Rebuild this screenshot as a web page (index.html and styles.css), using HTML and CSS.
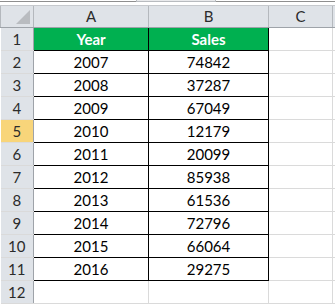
FILE: index.html
```html
<!DOCTYPE html>
<html lang="en">
<head>
    <meta charset="UTF-8">
    <title>Sales by Year</title>
    <link rel="stylesheet" href="styles.css">
</head>
<body>

<!-- top edge of the window -->
<div class="top-strip">
    <div class="scroll-stub"></div>
</div>

<table class="sheet">
    <colgroup>
        <col class="col-rownum">
        <col class="col-a">
        <col class="col-b">
        <col class="col-c">
        <col class="col-d">
    </colgroup>
    <thead>
        <tr>
            <th class="corner"><span class="corner-tri"></span></th>
            <th>A</th>
            <th>B</th>
            <th>C</th>
            <th></th>
        </tr>
    </thead>
    <tbody>
        <tr>
            <th class="rownum">1</th>
            <td class="head-cell">Year</td>
            <td class="head-cell">Sales</td>
            <td></td><td></td>
        </tr>
        <tr><th class="rownum">2</th><td class="data">2007</td><td class="data">74842</td><td></td><td></td></tr>
        <tr><th class="rownum">3</th><td class="data">2008</td><td class="data">37287</td><td></td><td></td></tr>
        <tr><th class="rownum">4</th><td class="data">2009</td><td class="data">67049</td><td></td><td></td></tr>
        <tr><th class="rownum active">5</th><td class="data">2010</td><td class="data">12179</td><td></td><td></td></tr>
        <tr><th class="rownum">6</th><td class="data">2011</td><td class="data">20099</td><td></td><td></td></tr>
        <tr><th class="rownum">7</th><td class="data">2012</td><td class="data">85938</td><td></td><td></td></tr>
        <tr><th class="rownum">8</th><td class="data">2013</td><td class="data">61536</td><td></td><td></td></tr>
        <tr><th class="rownum">9</th><td class="data">2014</td><td class="data">72796</td><td></td><td></td></tr>
        <tr><th class="rownum">10</th><td class="data">2015</td><td class="data">66064</td><td></td><td></td></tr>
        <tr><th class="rownum">11</th><td class="data">2016</td><td class="data">29275</td><td></td><td></td></tr>
        <tr><th class="rownum">12</th><td></td><td></td><td></td><td></td></tr>
    </tbody>
</table>

</body>
</html>
```

FILE: styles.css
```css
body {
    margin: 0;
    font-family: 'Lato', 'Liberation Sans', sans-serif;
    background-color: #ffffff;
    overflow: hidden;
}
.top-strip {
    height: 3px;
    border-top: 1px solid #8f8f8f;
    border-bottom: 1px solid #c6c9cd;
    margin-top: 1px;
    background-color: #ffffff;
    position: relative;
}
.scroll-stub {
    position: absolute;
    left: 136px;
    top: -2px;
    width: 78px;
    height: 1px;
    background-color: #e9eaec;
    border: 1px solid #b8bbbf;
    border-top: none;
}
.sheet {
    table-layout: fixed;
    border-collapse: collapse;
    width: 350px;
    font-size: 15px;
}
.col-rownum { width: 33px; }
.col-a { width: 115px; }
.col-b { width: 120px; }
.col-c { width: 64px; }
.col-d { width: 18px; }

.sheet th, .sheet td {
    height: 22px;
    padding: 0;
    text-align: center;
    border: 1px solid #dadada;
    line-height: 22px;
}
.sheet thead th {
    height: 21px;
    line-height: 21px;
    background-color: #dfe3e8;
    color: #2b2b2b;
    font-weight: normal;
    border: 1px solid #b4b8bd;
    border-bottom: 1px solid #9ea3a9;
    border-top: none;
}
.corner {
    position: relative;
}
.corner-tri {
    position: absolute;
    right: 3px;
    bottom: 3px;
    width: 0;
    height: 0;
    border-left: 14px solid transparent;
    border-bottom: 14px solid #b9bcc0;
}
.rownum {
    background-color: #dfe3e8;
    color: #2b2b2b;
    font-weight: normal;
    border-right: 1px solid #9ea3a9 !important;
    border-left: none !important;
    border-color: #c3c7cc;
}
.rownum.active {
    background-color: #f8d57a;
}
.head-cell {
    background-color: #00b050;
    color: #ffffff;
    font-weight: bold;
    border: 1px solid #000000 !important;
}
.data {
    color: #000000;
    border: 1px solid #000000 !important;
}
```
